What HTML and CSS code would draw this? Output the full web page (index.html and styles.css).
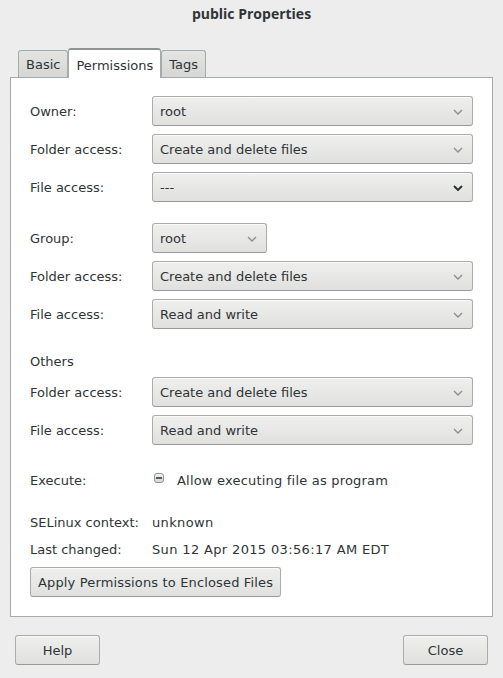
FILE: index.html
```html
<!DOCTYPE html>
<html>
<head>
<meta charset="utf-8">
<link rel="stylesheet" href="styles.css">
</head>
<body>
<div class="dialog">
  <header class="titlebar">public Properties</header>
  <div class="notebook">
    <div class="tabs">
      <div class="tab">Basic</div>
      <div class="tab active">Permissions</div>
      <div class="tab">Tags</div>
    </div>
    <div class="page">
      <div class="grid">
        <div class="label">Owner:</div>
        <div class="combo"><span>root</span><svg class="chev" viewBox="0 0 10 6"><polyline points="1,1 5,5 9,1"/></svg></div>
        <div class="label">Folder access:</div>
        <div class="combo"><span>Create and delete files</span><svg class="chev" viewBox="0 0 10 6"><polyline points="1,1 5,5 9,1"/></svg></div>
        <div class="label">File access:</div>
        <div class="combo"><span>---</span><svg class="chev dark" viewBox="0 0 10 6"><polyline points="1,1 5,5 9,1"/></svg></div>
      </div>
      <div class="grid sec2">
        <div class="label">Group:</div>
        <div class="cell"><div class="combo small"><span>root</span><svg class="chev" viewBox="0 0 10 6"><polyline points="1,1 5,5 9,1"/></svg></div></div>
        <div class="label">Folder access:</div>
        <div class="combo"><span>Create and delete files</span><svg class="chev" viewBox="0 0 10 6"><polyline points="1,1 5,5 9,1"/></svg></div>
        <div class="label">File access:</div>
        <div class="combo"><span>Read and write</span><svg class="chev" viewBox="0 0 10 6"><polyline points="1,1 5,5 9,1"/></svg></div>
      </div>
      <div class="heading">Others</div>
      <div class="grid sec3">
        <div class="label">Folder access:</div>
        <div class="combo"><span>Create and delete files</span><svg class="chev" viewBox="0 0 10 6"><polyline points="1,1 5,5 9,1"/></svg></div>
        <div class="label">File access:</div>
        <div class="combo"><span>Read and write</span><svg class="chev" viewBox="0 0 10 6"><polyline points="1,1 5,5 9,1"/></svg></div>
      </div>
      <div class="row exec">
        <div class="label">Execute:</div>
        <div class="check"><span class="box"></span><span class="checklabel">Allow executing file as program</span></div>
      </div>
      <div class="row info first">
        <div class="label">SELinux context:</div>
        <div class="value">unknown</div>
      </div>
      <div class="row info">
        <div class="label">Last changed:</div>
        <div class="value">Sun 12 Apr 2015 03:56:17 AM EDT</div>
      </div>
      <div class="applyrow"><button class="btn apply">Apply Permissions to Enclosed Files</button></div>
    </div>
  </div>
  <div class="actions">
    <button class="btn action">Help</button>
    <button class="btn action">Close</button>
  </div>
</div>
</body>
</html>
```
FILE: styles.css
```css
html, body {
  margin: 0;
  padding: 0;
  background: #ededed;
}
body {
  width: 503px;
  height: 678px;
  font-family: "DejaVu Sans", "Noto Sans", sans-serif;
  font-size: 13px;
  color: #2e3436;
}
.titlebar {
  height: 28px;
  line-height: 28px;
  text-align: center;
  font-family: "Open Sans", "Noto Sans", sans-serif;
  font-weight: bold;
  font-size: 14px;
  color: #2e3436;
}
.notebook {
  margin: 19px 10px 0 10px;
}
.tabs {
  display: flex;
  align-items: flex-end;
  padding-left: 8px;
  height: 30px;
}
.tab {
  height: 26px;
  line-height: 28px;
  padding: 0 7px;
  border: 1px solid #a4abab;
  border-bottom: none;
  border-radius: 3px 3px 0 0;
  background: linear-gradient(#e4e4e2, #d6d6d4);
  color: #2e3436;
  box-sizing: content-box;
}
.tab.active {
  line-height: 32px;
  background: #ffffff;
  padding: 0 7px;
  margin-bottom: -1px;
  position: relative;
  border-top: 2px solid #8c9494;
  height: 28px;
}
.page {
  background: #ffffff;
  border: 1px solid #a4abab;
  padding: 18px 18px 18px 19px;
  height: 502px;
  box-sizing: content-box;
}
.grid {
  display: grid;
  grid-template-columns: 122px 321px;
  row-gap: 8px;
  align-items: center;
}
.sec2 { margin-top: 21px; }
.sec3 { margin-top: 6px; }
.heading {
  margin-top: 22px;
  height: 20px;
  line-height: 22px;
}
.label {
  white-space: nowrap;
  padding-top: 1px;
}
.cell { display: flex; }
.combo {
  height: 30px;
  box-sizing: border-box;
  border: 1px solid #acacac;
  border-bottom-color: #9a9a9a;
  border-radius: 3px;
  background: linear-gradient(#efefee, #e0e0df);
  display: flex;
  align-items: center;
  justify-content: space-between;
  padding: 1px 9px 0 7px;
  box-shadow: inset 0 1px 0 rgba(255,255,255,0.7);
  white-space: nowrap;
}
.combo.small { width: 115px; }
.chev {
  width: 10px;
  height: 6px;
  fill: none;
  stroke: #8a8f90;
  stroke-width: 1.4;
}
.chev.dark { stroke: #2e3436; stroke-width: 2; }
.row {
  display: grid;
  grid-template-columns: 122px 1fr;
  align-items: center;
}
.exec {
  margin-top: 20px;
  height: 30px;
}
.check {
  display: flex;
  align-items: center;
  padding-top: 1px;
}
.box {
  width: 10px;
  height: 10px;
  margin-left: 2px;
  margin-top: -6px;
  border: 1px solid #8e9292;
  border-radius: 3px;
  background: linear-gradient(#f2f2f2, #d8d8d8);
  position: relative;
  box-sizing: border-box;
}
.box::after {
  content: "";
  position: absolute;
  left: 1px;
  right: 1px;
  top: 3px;
  height: 2px;
  background: #555b5c;
}
.checklabel { margin-left: 13px; letter-spacing: 0.2px; }
.info {
  height: 20px;
  line-height: 22px;
}
.info .label { padding-top: 0; }
.info.first { margin-top: 17px; }
.info + .info { margin-top: 7px; }
.value { letter-spacing: 0.35px; }
.applyrow {
  margin-top: 8px;
  display: flex;
}
.btn {
  font-family: "DejaVu Sans", "Noto Sans", sans-serif;
  font-size: 13px;
  color: #2e3436;
  height: 30px;
  border: 1px solid #acacac;
  border-bottom-color: #9a9a9a;
  border-radius: 3px;
  background: linear-gradient(#efefee, #e0e0df);
  box-shadow: inset 0 1px 0 rgba(255,255,255,0.7);
  padding: 1px 7px 0;
  margin: 0;
  white-space: nowrap;
}
.apply { min-width: 251px; letter-spacing: 0.15px; }
.actions {
  display: flex;
  justify-content: space-between;
  padding: 0 15px;
  margin-top: 18px;
}
.action { width: 85px; }
```
